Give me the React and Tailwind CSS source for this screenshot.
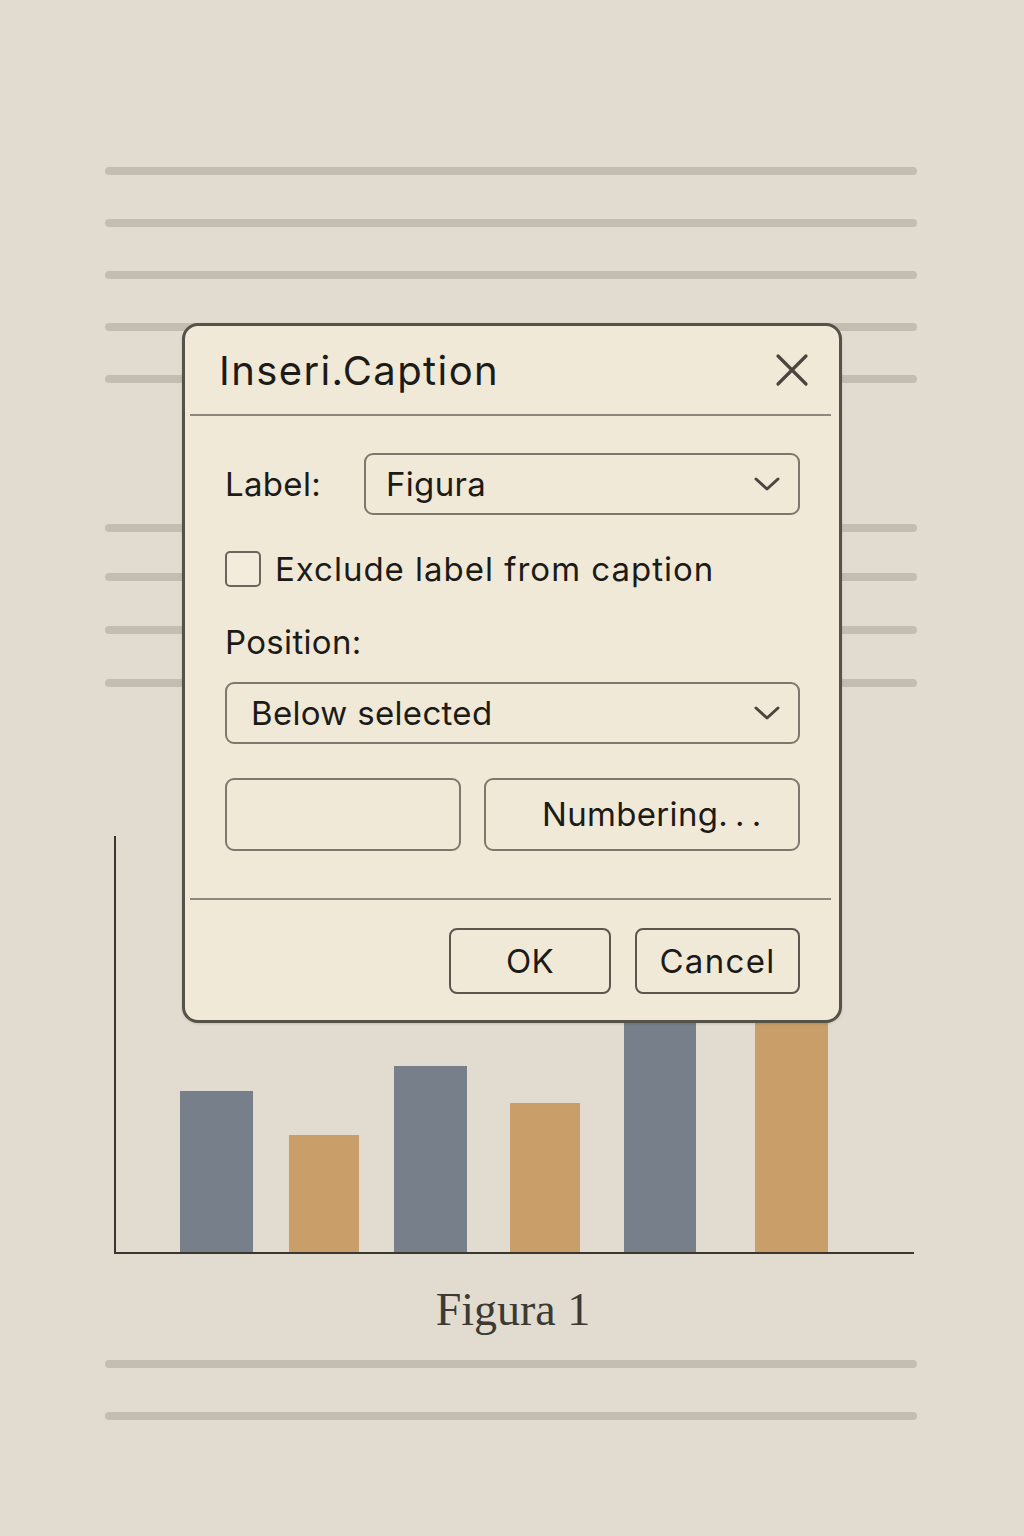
import { useState } from 'react';

const sans = { fontFamily: 'Inter, "Noto Sans", sans-serif' };

const Chevron = () => (
    <svg width="26" height="16" viewBox="0 0 26 16" fill="none">
        <path d="M2 3 L13 13 L24 3" stroke="#4a463e" strokeWidth="3" strokeLinecap="round" strokeLinejoin="round" />
    </svg>
);

const Line = ({ className = '' }) => (
    <div className={`h-[8px] rounded-full bg-[#c4bdb2] ${className}`}></div>
);

const bars = [
    { ml: 'ml-[64px]', w: 'w-[73px]', h: 'h-[161px]', c: 'bg-[#77808a]' },
    { ml: 'ml-[36px]', w: 'w-[70px]', h: 'h-[117px]', c: 'bg-[#c99e68]' },
    { ml: 'ml-[35px]', w: 'w-[73px]', h: 'h-[186px]', c: 'bg-[#77808a]' },
    { ml: 'ml-[43px]', w: 'w-[70px]', h: 'h-[149px]', c: 'bg-[#c99e68]' },
    { ml: 'ml-[44px]', w: 'w-[72px]', h: 'h-[260px]', c: 'bg-[#77808a]' },
    { ml: 'ml-[59px]', w: 'w-[73px]', h: 'h-[250px]', c: 'bg-[#c99e68]' },
];

const App = () => {
    const [exclude, setExclude] = useState(false);

    return (
        <div className="relative w-[1024px] h-[1536px] overflow-hidden bg-[#e2dcd0]">
            {/* Document body */}
            <div className="pt-[167px] pl-[105px] pr-[107px]">
                <div className="flex flex-col gap-[44px]">
                    <Line />
                    <Line />
                    <Line />
                    <Line />
                    <Line />
                </div>
                <div className="mt-[141px] flex flex-col">
                    <Line />
                    <Line className="mt-[41px]" />
                    <Line className="mt-[45px]" />
                    <Line className="mt-[45px]" />
                </div>

                {/* Chart */}
                <div className="mt-[149px] ml-[9px] w-[800px] h-[418px] border-l-2 border-b-2 border-[#3a3630] flex items-end">
                    {bars.map((b, i) => (
                        <div key={i} className={`${b.ml} ${b.w} ${b.h} ${b.c}`}></div>
                    ))}
                </div>

                <div className="mt-[30px] h-[52px] flex items-center justify-center text-[46px] leading-none text-[#3d3a33] pl-[4px]" style={{ fontFamily: '"Liberation Serif", "DejaVu Serif", serif' }}>
                    Figura 1
                </div>

                <Line className="mt-[24px]" />
                <Line className="mt-[44px]" />
            </div>

            {/* Insert Caption dialog */}
            <div className="absolute left-[182px] top-[323px] w-[660px] h-[700px] rounded-[16px] border-[3px] border-[#55524a] bg-[#f1e9d7] text-[#1c1b18] tracking-[0.02em] shadow-sm" style={sans}>
                <div className="h-[88px] flex items-center justify-between pl-[34px] pr-[30px]">
                    <span className="text-[40px] leading-none pt-[2px] tracking-[0.035em]">Inseri.Caption</span>
                    <svg width="34" height="34" viewBox="0 0 34 34" fill="none">
                        <path d="M3 3 L31 31 M31 3 L3 31" stroke="#4a463e" strokeWidth="3.2" strokeLinecap="round" />
                    </svg>
                </div>
                <div className="mx-[5px] mr-[8px] h-[2px] bg-[#8d877d]"></div>

                <div className="pl-[40px] pr-[39px]">
                    <div className="mt-[37px] flex items-center">
                        <span className="w-[139px] text-[33px] leading-none">Label:</span>
                        <div className="flex-1 h-[62px] rounded-[9px] border-2 border-[#7d776d] flex items-center justify-between pl-[20px] pr-[18px]">
                            <span className="text-[33px] leading-none">Figura</span>
                            <Chevron />
                        </div>
                    </div>

                    <label className="mt-[36px] flex items-center gap-[14px] cursor-pointer">
                        <button
                            type="button"
                            onClick={() => setExclude(!exclude)}
                            className="w-[36px] h-[36px] rounded-[5px] border-2 border-[#6b665d] bg-[#f3ecdc]"
                        ></button>
                        <span className="text-[33px] leading-none tracking-[0.03em]">Exclude label from caption</span>
                    </label>

                    <div className="mt-[35px] h-[40px] flex items-center text-[33px] leading-none">Position:</div>

                    <div className="mt-[20px] h-[62px] rounded-[9px] border-2 border-[#7d776d] flex items-center justify-between pl-[24px] pr-[18px]">
                        <span className="text-[33px] leading-none">Below selected</span>
                        <Chevron />
                    </div>

                    <div className="mt-[34px] flex gap-[23px]">
                        <div className="w-[236px] h-[73px] rounded-[9px] border-2 border-[#7d776d]"></div>
                        <button type="button" className="flex-1 h-[73px] rounded-[9px] border-2 border-[#7d776d] flex items-center pl-[56px] text-[33px] leading-none">
                            Numbering<span className="tracking-[0.22em]">...</span>
                        </button>
                    </div>
                </div>

                <div className="mt-[47px] mx-[5px] mr-[8px] h-[2px] bg-[#8d877d]"></div>

                <div className="mt-[28px] pr-[39px] flex justify-end gap-[24px]">
                    <button type="button" className="w-[162px] h-[66px] rounded-[8px] border-2 border-[#5b574f] flex items-center justify-center text-[33px] leading-none">
                        OK
                    </button>
                    <button type="button" className="w-[165px] h-[66px] rounded-[8px] border-2 border-[#5b574f] flex items-center justify-center text-[33px] leading-none tracking-[0.04em]">
                        Cancel
                    </button>
                </div>
            </div>
        </div>
    );
};

export default App;
